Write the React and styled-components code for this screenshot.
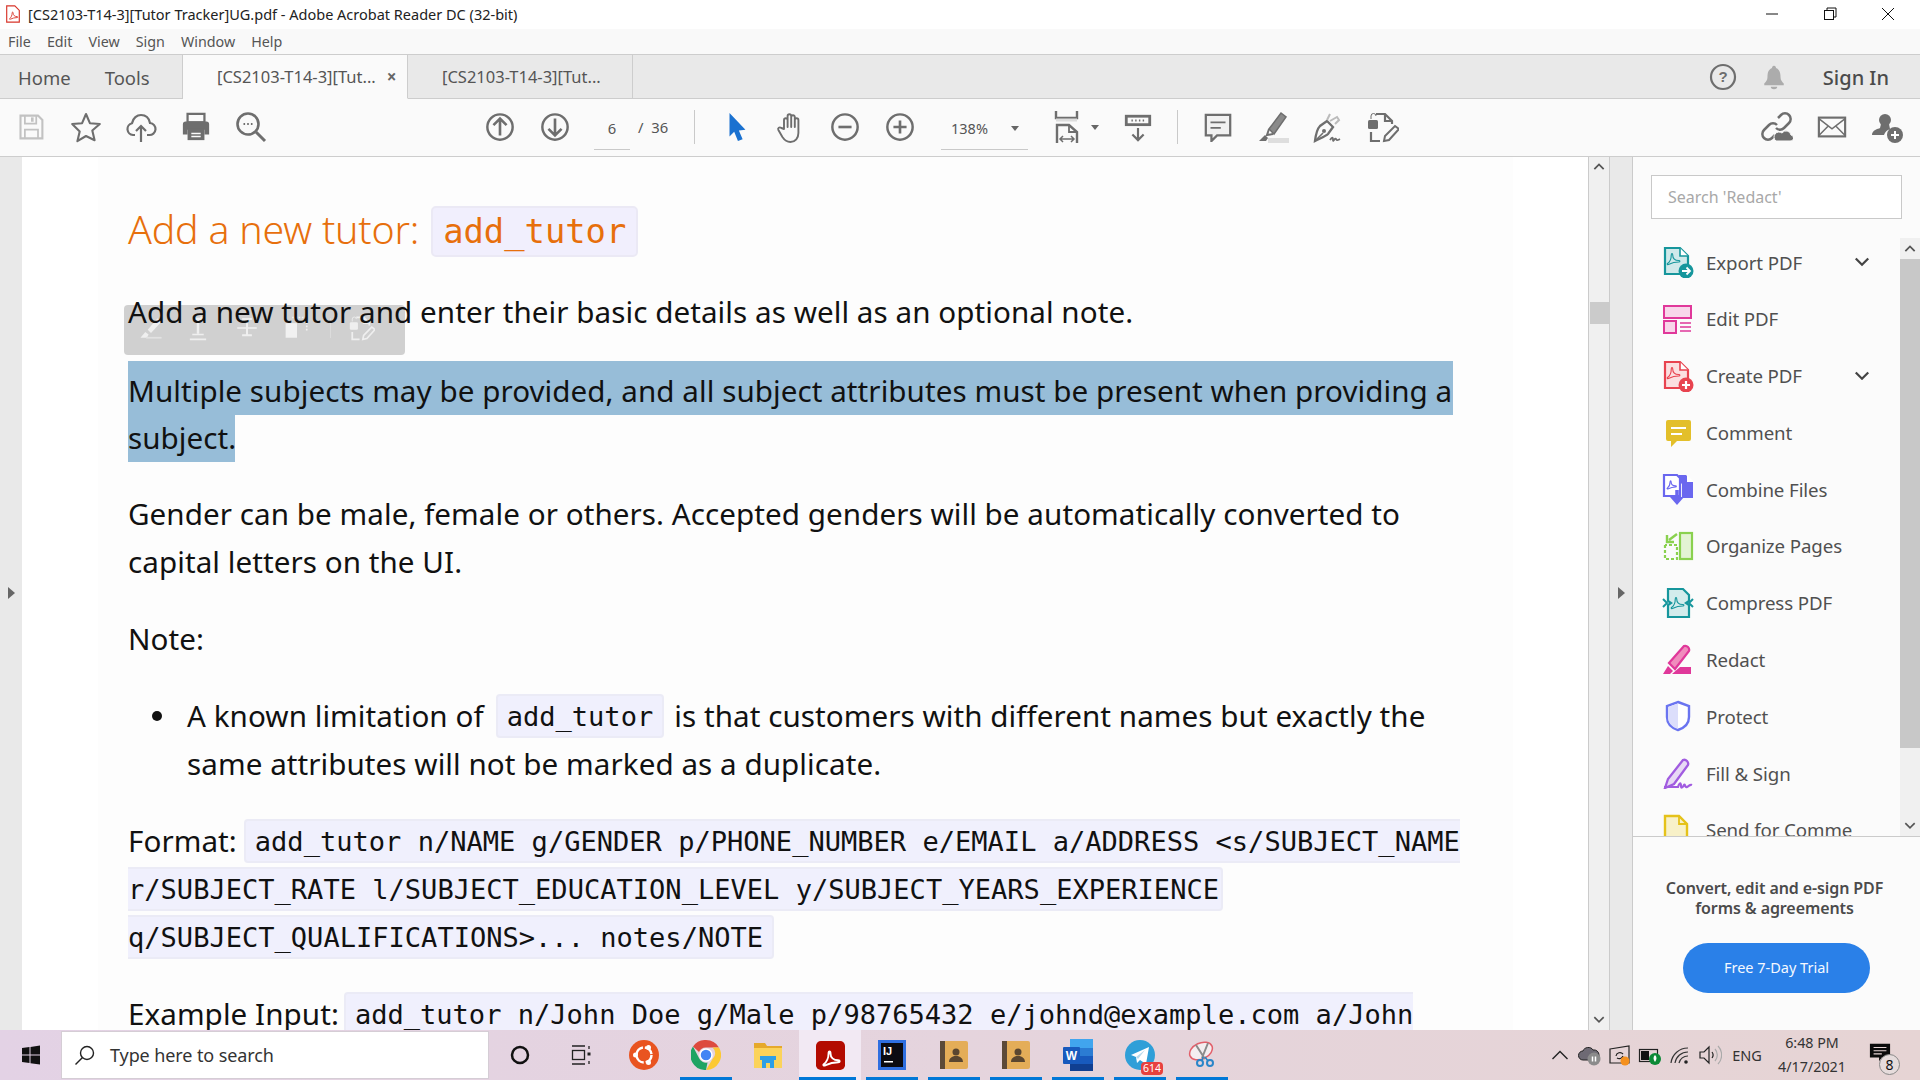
import React from "react";
import styled, { createGlobalStyle } from "styled-components";

const Global = createGlobalStyle`
  html, body { margin: 0; padding: 0; background: #fff; overflow: hidden; }
  * { box-sizing: border-box; }
`;
const SANS = `"Noto Sans", "Open Sans", sans-serif`;
const MONO = `"DejaVu Sans Mono", "Liberation Mono", monospace`;

const Root = styled.div`width:1920px;height:1080px;display:flex;flex-direction:column;overflow:hidden;font-family:${SANS};color:#505050;`;
const TitleBar = styled.div`height:29px;display:flex;align-items:center;background:#fff;padding:0 0 1px 4px;flex:none;`;
const TitleText = styled.span`font-size:14.5px;color:#222;margin-left:6px;white-space:nowrap;`;
const WinButtons = styled.div`margin-left:auto;display:flex;padding-right:3px;`;
const WinButton = styled.div`width:58px;height:28px;display:flex;align-items:center;justify-content:center;`;
const MenuBar = styled.div`height:25px;display:flex;align-items:center;background:#f9f9f9;padding-left:8px;gap:16px;flex:none;`;
const MenuItem = styled.span`font-size:14.3px;color:#555;`;
const TabBar = styled.div`height:45px;flex:none;display:flex;background:#e9e9e9;border-top:1px solid #cdcdcd;border-bottom:1px solid #cdcdcd;`;
const NavTabs = styled.div`width:183px;display:flex;align-items:center;padding-left:18px;gap:34px;border-right:1px solid #cdcdcd;margin-bottom:-1px;`;
const NavTab = styled.span`font-size:18.5px;color:#555;`;
const DocTab = styled.div`width:${p=>p.$w}px;display:flex;align-items:center;padding-left:34px;font-size:16.5px;color:#555;margin-bottom:-1px;white-space:nowrap;
  background:${p=>p.$active?"#fafafa":"#e9e9e9"};border-right:1px solid #cdcdcd;border-bottom:${p=>p.$active?"1px solid #fafafa":"1px solid #cdcdcd"};`;
const TabClose = styled.span`margin-left:11px;font-size:17px;font-weight:700;color:#666;`;
const TabRight = styled.div`margin-left:auto;display:flex;align-items:center;padding-right:31px;`;
const SignIn = styled.span`font-size:20px;font-weight:500;color:#4b4b4b;margin-left:36px;padding-top:1px;`;
const Toolbar = styled.div`height:58px;flex:none;display:flex;align-items:center;background:#fafafa;border-bottom:1px solid #cdcdcd;padding:0 6px 1px 3px;`;
const Tool = styled.div`width:${p=>p.$w||55}px;height:40px;flex:none;display:flex;align-items:center;justify-content:center;`;
const Gap = styled.div`width:${p=>p.$w}px;flex:none;`;
const Grow = styled.div`flex:1;`;
const Divider = styled.div`width:1px;height:34px;background:#c9c9c9;flex:none;`;
const PageBox = styled.div`width:36px;height:42px;display:flex;align-items:center;justify-content:center;border-bottom:1px solid #c9c9c9;font-size:14.8px;color:#555;margin-top:3px;flex:none;`;
const PageTotal = styled.div`width:31px;margin-left:8px;font-size:14.8px;color:#555;flex:none;white-space:nowrap;`;
const ZoomBox = styled.div`width:87px;height:42px;display:flex;align-items:center;padding-left:10px;justify-content:space-between;padding-right:9px;border-bottom:1px solid #c9c9c9;font-size:14.5px;color:#555;margin-top:3px;flex:none;`;
const Caret = styled.span`width:0;height:0;border-left:4px solid transparent;border-right:4px solid transparent;border-top:5px solid #666;flex:none;`;

const Main = styled.div`height:873px;flex:none;display:flex;`;
const Gutter = styled.div`width:${p=>p.$w}px;background:#e9e9e9;flex:none;display:flex;align-items:center;justify-content:center;`;
const Arrow = styled.span`width:0;height:0;border-top:6px solid transparent;border-bottom:6px solid transparent;border-left:7px solid #666;margin-top:-2px;`;
const DocView = styled.div`width:1566px;flex:none;background:#fff;overflow:hidden;position:relative;`;
const Page = styled.div`margin-left:76px;width:1415px;height:873px;background:#fdfdfd;padding:49px 0 0 30px;position:relative;font-size:29.6px;letter-spacing:.06px;color:#111;`;
const Heading = styled.div`display:flex;align-items:center;height:51px;color:#e76f0c;font-size:39.3px;font-weight:300;letter-spacing:-.2px;gap:12px;white-space:nowrap;`;
const HeadLabel = styled.span`display:block;margin-top:-6px;`;
const HeadCode = styled.code`font-family:${MONO};font-size:33.8px;letter-spacing:0;background:#f1effd;border:2px solid #ebe9f5;border-radius:5px;height:51px;display:flex;align-items:center;padding:0 10px;`;
const Para = styled.div`margin-top:${p=>p.$mt||29}px;position:relative;z-index:1;`;
const Line = styled.div`height:48px;line-height:46px;white-space:nowrap;display:flex;align-items:center;padding-bottom:1px;`;
const CodeLine = styled.div`height:48px;white-space:nowrap;display:flex;align-items:center;`;
const Selected = styled.span`display:block;background:#97bdd8;height:${p=>p.$h}px;line-height:${p=>p.$h===54?"59px":"48px"};margin-top:${p=>p.$h===54?-3:1}px;white-space:nowrap;width:${p=>p.$w}px;`;
const FloatBar = styled.div`position:absolute;left:26px;top:148px;width:281px;height:50px;background:#d0d0d0;border-radius:4px;display:flex;align-items:center;padding:0 6px 4px 5px;z-index:0;`;
const FloatSlot = styled.div`width:${p=>p.$w}px;display:flex;justify-content:center;flex:none;`;
const FloatSep = styled.div`width:1px;height:20px;background:#dcdcdc;margin:0 14px 0 9px;`;
const Code = styled.code`font-family:${MONO};font-size:27.05px;letter-spacing:0;background:#f0f0fd;border:2px solid #ebebf6;display:inline-block;height:44px;line-height:42px;white-space:pre;
  padding:0 ${p=>p.$pr!==undefined?p.$pr:p.$open==="right"?0:9}px 0 ${p=>p.$open==="left"?0:9}px;
  border-left-width:${p=>p.$open==="left"?0:2}px;border-right-width:${p=>p.$open==="right"?0:2}px;
  border-radius:${p=>p.$open==="left"?"0 4px 4px 0":p.$open==="right"?"4px 0 0 4px":"4px"};margin-left:${p=>p.$ml||0}px;margin-right:${p=>p.$mr||0}px;`;
const ListRow = styled.div`display:flex;align-items:flex-start;`;
const Bullet = styled.span`width:10px;height:10px;border-radius:50%;background:#111;margin:19px 25px 0 24px;flex:none;`;

const ScrollBar = styled.div`width:22px;flex:none;background:#f0f0f0;border-left:1px solid #cbcbcb;border-right:1px solid #cbcbcb;display:flex;flex-direction:column;align-items:center;`;
const ScrollBtn = styled.div`height:20px;flex:none;display:flex;align-items:center;justify-content:center;margin-top:${p=>p.$auto?"auto":"0"};`;
const Thumb = styled.div`width:19px;height:22px;background:#cbcbcb;margin-top:125px;`;

const Panel = styled.div`width:288px;flex:none;background:#fbfbfb;border-left:1px solid #cbcbcb;display:flex;flex-direction:column;`;
const SearchWrap = styled.div`height:81px;flex:none;padding:18px 17px 0 18px;`;
const SearchBox = styled.div`height:44px;background:#fff;border:1px solid #c9c9c9;display:flex;align-items:center;padding-left:16px;font-size:16px;color:#a8a8a8;width:251px;`;
const ToolsRow = styled.div`height:598px;flex:none;display:flex;`;
const ToolList = styled.div`flex:1;overflow:hidden;padding-left:17px;`;
const ToolItem = styled.div`height:56.8px;width:228px;margin-top:${p=>p.$first?-4.4:0}px;display:flex;align-items:center;padding:0 8px 0 12px;font-size:18.7px;letter-spacing:-.1px;color:#505050;white-space:nowrap;flex:none;`;
const ToolIcon = styled.div`width:32px;height:32px;flex:none;margin-right:12px;display:flex;align-items:center;justify-content:center;`;
const Chev = styled.div`margin-left:auto;display:flex;`;
const SideScroll = styled.div`width:20px;flex:none;background:#f0f0f0;display:flex;flex-direction:column;`;
const SideThumb = styled.div`height:489px;background:#c8c8c8;flex:none;`;
const SideBtn = styled.div`height:21px;flex:none;display:flex;align-items:center;justify-content:center;margin-top:${p=>p.$auto?"auto":"0"};`;
const Promo = styled.div`flex:1;border-top:1px solid #cbcbcb;display:flex;flex-direction:column;align-items:center;padding-top:41px;`;
const PromoText = styled.div`font-size:16px;font-weight:600;line-height:20px;text-align:center;color:#4b4b4b;letter-spacing:-.1px;margin-right:4px;`;
const TrialBtn = styled.div`width:187px;height:50px;background:#2a80e8;border-radius:25px;color:#f4f8ff;font-size:14.5px;display:flex;align-items:center;justify-content:center;margin-top:25px;padding-bottom:2px;`;

const Taskbar = styled.div`height:50px;flex:none;display:flex;align-items:stretch;background:linear-gradient(90deg,#e3d2e5 0%,#e5d4dd 50%,#e6d4d4 100%);color:#222;`;
const StartBtn = styled.div`width:61px;display:flex;align-items:center;justify-content:center;flex:none;`;
const TaskSearch = styled.div`width:428px;flex:none;background:#fff;margin:1px 0;border:1px solid #d5cdd5;display:flex;align-items:center;padding-left:12px;font-size:18px;color:#333;gap:14px;letter-spacing:-.1px;`;
const TaskSlot = styled.div`width:62px;flex:none;position:relative;display:flex;align-items:center;justify-content:center;background:${p=>p.$active?"#f2e9f3":"transparent"};
  &::after{content:"";display:${p=>p.$run?"block":"none"};position:absolute;bottom:0;left:${p=>p.$active?0:5}px;right:5px;height:3px;background:#0078d7;}`;
const Badge = styled.span`position:absolute;right:8px;bottom:5px;background:#e8413e;color:#fff;font-size:10.5px;line-height:13px;padding:0 2px;border-radius:4px;`;
const Tray = styled.div`margin-left:auto;display:flex;align-items:center;padding-right:15px;`;
const TraySlot = styled.div`width:${p=>p.$w||30}px;display:flex;justify-content:center;align-items:center;flex:none;`;
const TrayText = styled.span`font-size:14.5px;color:#333;`;
const Clock = styled.div`width:86px;text-align:center;font-size:14.3px;line-height:24px;color:#333;flex:none;`;
const NotifWrap = styled.div`width:50px;height:50px;position:relative;display:flex;align-items:center;justify-content:center;flex:none;padding-bottom:4px;`;
const NotifBadge = styled.span`position:absolute;left:24px;top:24px;width:21px;height:21px;border-radius:50%;background:#e6dcdc;border:1px solid #888;font-size:14px;line-height:19px;text-align:center;color:#111;`;

const Svg = styled.svg`display:block;flex:none;`;
const I = ({ s = 30, w, h, vb = "0 0 32 32", children }) => (
  <Svg width={w || s} height={h || s} viewBox={vb} fill="none">{children}</Svg>
);
const G = "#6e6e6e";

const PdfMark = ({ c, sw = 1.3 }) => <path d="M6 22c3-2 5-7 5-11 0-3 2-3 2 0 0 4 3 7 8 7 2 0 2 2 0 2-5 0-9 1-13 3-2 1-3 0-2-1z" fill="none" stroke={c} strokeWidth={sw} strokeLinejoin="round" />;

const IconSave = () => <I s={28}><path d="M4 3h20l5 5v21H4z" stroke="#c2c2c2" strokeWidth="2.4" /><path d="M9 3v9h13V3M9 29V19h15v10" stroke="#c2c2c2" strokeWidth="2" /><rect x="16" y="5" width="3" height="5" fill="#c2c2c2" /></I>;
const IconStar = () => <I s={32}><path d="M16 3l3.9 9.2 9.9.8-7.5 6.5 2.3 9.7L16 25l-8.6 5.2 2.3-9.7L2.2 13l9.9-.8z" stroke={G} strokeWidth="2.1" strokeLinejoin="round" /></I>;
const IconCloudUp = () => <I s={32}><path d="M10 24H8a6 6 0 0 1-1-11.8C8 7 12 4 16 4c5 0 8 3 9 8a6 6 0 0 1-1 12h-2" stroke={G} strokeWidth="2.2" /><path d="M16 31V15M11 20l5-5 5 5" stroke={G} strokeWidth="2.2" /></I>;
const IconPrint = () => <I s={30}><rect x="7" y="2" width="18" height="9" stroke={G} strokeWidth="2.4" fill="none" /><path d="M5 10h22a3 3 0 0 1 3 3v11h-5v-5H7v5H2V13a3 3 0 0 1 3-3z" fill={G} /><path d="M7 18h18v12H7z" fill={G} /><path d="M11 23h10M11 26h10" stroke="#fafafa" strokeWidth="1.6" /></I>;
const IconSearchDots = () => <I s={32}><circle cx="13" cy="13" r="10.5" stroke={G} strokeWidth="2.6" /><path d="M21 21l9 9" stroke={G} strokeWidth="3" /><path d="M8.5 13h1.6M12.2 13h1.6M15.9 13h1.6" stroke={G} strokeWidth="2" /></I>;
const CircleI = ({ d }) => <I s={30}><circle cx="16" cy="16" r="13.5" stroke={G} strokeWidth="2.6" /><path d={d} stroke={G} strokeWidth="2.8" /></I>;
const IconCursor = () => <I s={30}><path d="M8 1l17 18-7 .6 4 9.4-5 2-4-10-5 5z" fill="#1a71d0" /></I>;
const IconHand = () => <I s={32}><path d="M9 18V9a1.8 1.8 0 0 1 3.6 0v7V5a1.8 1.8 0 0 1 3.6 0v11V6a1.8 1.8 0 0 1 3.6 0v10-7a1.8 1.8 0 0 1 3.6 0v13c0 5-3 9-8 9-4 0-6-2-8-5l-4-7c-1-2 1-3.5 3-2z" stroke={G} strokeWidth="1.9" strokeLinejoin="round" /></I>;
const IconFit = () => <I s={32}><path d="M3 0v7h21V0" stroke={G} strokeWidth="2.4" /><path d="M3 9h21" stroke="#ddd" strokeWidth="3" /><path d="M4 32V14h12l8 7v11" stroke={G} strokeWidth="2.4" /><path d="M16 14v7h8" stroke={G} strokeWidth="1.8" /><path d="M7 28h14M10 25l-3 3 3 3M18 25l3 3-3 3" stroke={G} strokeWidth="1.5" /></I>;
const IconScroll = () => <I s={30}><rect x="2" y="3" width="28" height="12" fill={G} /><rect x="5" y="6" width="22" height="6" fill="#fafafa" /><path d="M9 9h1.5M13 9h1.5M17 9h1.5M21 9h1.5" stroke={G} strokeWidth="2" /><path d="M16 17v13M10 24l6 6 6-6" stroke={G} strokeWidth="2.3" /></I>;
const IconComment = () => <I s={30}><path d="M3 3h26v22H15l-6 6v-6H3z" stroke={G} strokeWidth="2.4" fill="#f1f1f1" /><path d="M8 11h16M8 17h11" stroke={G} strokeWidth="1.8" /></I>;
const IconHighlight = () => <I s={32}><path d="M12 18L24 2l5 4-12 17z" fill="#8a8a8a" stroke={G} strokeWidth="1.5" /><path d="M12 18l-2 6 6-1" stroke={G} strokeWidth="2" /><path d="M2 30l6-6 3 3-2 3z" fill={G} /><rect x="11" y="27" width="21" height="5" fill="#dedede" /></I>;
const IconPen = () => <I s={32}><path d="M3 30c1-8 3-13 5-15l7-5 6 6-5 7c-2 2-7 4-13 7z" stroke={G} strokeWidth="2.3" /><path d="M3 30l8-8" stroke={G} strokeWidth="1.6" /><circle cx="12" cy="20" r="2" fill={G} /><path d="M15 9l3-6M18 10l7-4 2 3-4 4" stroke="#bbb" strokeWidth="2" /><path d="M18 29c2-3 3-3 3 0s2-3 3-1 2 1 4 0" stroke={G} strokeWidth="1.8" /></I>;
const IconShare = ({ c = G, bg = "#fafafa", s = 32 }) => <I s={s}><rect x="1" y="9" width="10" height="9" rx="1.5" fill={c} /><path d="M4 8V5a2.5 2.5 0 0 1 5 0" stroke={c} strokeWidth="1" /><path d="M9 3h9l7 7v3M18 3v7h7" stroke={c} strokeWidth="2.2" /><path d="M4 21v9h9" stroke={c} strokeWidth="2.2" /><path d="M17 30l1-5 10-10 4 3-10 11z" stroke={c} strokeWidth="2" fill={bg} /></I>;
const IconLink = () => <I s={32}><path d="M17 7l3-3a5.6 5.6 0 0 1 8 8l-5 5a5.6 5.6 0 0 1-8 0" stroke={G} strokeWidth="2.5" /><path d="M14 24l-3 3a5.6 5.6 0 0 1-8-8l5-5a5.6 5.6 0 0 1 8 0" stroke={G} strokeWidth="2.5" /><path d="M15 30h14a3 3 0 0 0 1-6 5 5 0 0 0-9-2 4 4 0 0 0-6 8z" fill={G} stroke="#fafafa" strokeWidth="1" /></I>;
const IconMail = () => <I s={30}><rect x="2" y="6" width="28" height="20" stroke={G} strokeWidth="2.3" /><path d="M2 7l14 11L30 7M2 25l10-10M30 25L20 15" stroke={G} strokeWidth="1.6" /></I>;
const IconPerson = () => <I s={32}><circle cx="14" cy="9" r="6" fill={G} /><path d="M1 24c0-5 6-6 8-7l1-4h8l1 5c-3 1-5 3-6 6z" fill={G} /><circle cx="24" cy="24" r="8" fill={G} /><path d="M24 20v8M20 24h8" stroke="#fff" strokeWidth="2" /></I>;
const IconHelp = () => <Svg width="28" height="28" viewBox="0 0 28 28" fill="none"><circle cx="14" cy="14" r="12" stroke="#6e6e6e" strokeWidth="2.2" /><text x="14" y="19" fontSize="15" fontWeight="700" textAnchor="middle" fill="#6e6e6e" fontFamily="Liberation Sans">?</text></Svg>;
const IconBell = () => <I s={26}><path d="M16 2c2 0 2.500 2 2.500 3 5 2 5.500 7 5.500 11 0 4 2 6 4 8v2H4v-2c2-2 4-4 4-8 0-4 .5-9 5.500-11 0-1 .5-3 2.500-3z" fill="#acacac" /><path d="M12 28a4 3 0 0 0 8 0z" fill="#acacac" /></I>;
const ChevD = ({ c = "#444", w = 16 }) => <Svg width={w} height={w * .6} viewBox="0 0 16 10" fill="none"><path d="M1.500 1.500L8 8l6.500-6.500" stroke={c} strokeWidth="2.300" /></Svg>;
const ChevU = ({ c = "#555", w = 12 }) => <Svg width={w} height={w * .6} viewBox="0 0 16 10" fill="none"><path d="M1.500 8.500L8 2l6.500 6.500" stroke={c} strokeWidth="2.500" /></Svg>;

const DocBadge = ({ c, fillc, mark, children }) => (
  <I s={32}>
    <path d="M3 2h15l8 8v18H3z" stroke={c} strokeWidth="2.2" fill={fillc} />
    <path d="M18 2v8h8" stroke={c} strokeWidth="1.6" fill="#fff" />
    <g transform="translate(1 1) scale(.75)"><PdfMark c={mark || c} sw={1.5} /></g>
    {children}
  </I>
);
const SideExport = () => <DocBadge c="#16969c" fillc="#cfe9ea"><circle cx="24" cy="25" r="7.500" fill="#16969c" /><path d="M20 25h7M24.500 21.500l3.500 3.500-3.500 3.500" stroke="#fff" strokeWidth="1.800" /></DocBadge>;
const SideCreate = () => <DocBadge c="#e8434f" fillc="#fbdfe0"><circle cx="24" cy="25" r="7.500" fill="#e8434f" /><path d="M24 21v8M20 25h8" stroke="#fff" strokeWidth="2.200" /></DocBadge>;
const SideEdit = () => <I s={32}><rect x="2" y="3" width="27" height="12" stroke="#e0389a" strokeWidth="2" fill="#f8d6ea" /><rect x="2" y="18" width="12" height="12" stroke="#e0389a" strokeWidth="2" fill="#f8d6ea" /><path d="M18 20h11M18 24h11M18 28h11" stroke="#e0389a" strokeWidth="1.500" /></I>;
const SideComment = () => <I s={32}><path d="M6 4h21a2 2 0 0 1 2 2v17a2 2 0 0 1-2 2H15l-6 6v-6H6a2 2 0 0 1-2-2V6a2 2 0 0 1 2-2z" fill="#e3bf2a" /><path d="M9 12h15M9 18h11" stroke="#fff" strokeWidth="2.200" /></I>;
const SideCombine = () => <I s={32}><path d="M2 2h13l3 3v18H2z" stroke="#6a67ef" strokeWidth="2.200" fill="#fff" /><path d="M17 2h7l7 7v16H20V11l-3-3z" fill="#6a67ef" /><path d="M25 2v7h7" fill="#fff" /><g transform="translate(2 3) scale(.55)"><PdfMark c="#6a67ef" sw={2} /></g><path d="M15 17v10" stroke="#6a67ef" strokeWidth="3.500" /><path d="M8 24h14l-7 8z" fill="#6a67ef" /></I>;
const SideOrganize = () => <I s={32}><rect x="18" y="3" width="12" height="26" fill="#e3f3d4" stroke="#8ad14f" strokeWidth="2.200" /><path d="M3 15v14h12V15H3" stroke="#8ad14f" strokeWidth="2.200" strokeDasharray="3 2" /><path d="M15 4L7 10M5 5v7h7" stroke="#8ad14f" strokeWidth="2.400" /></I>;
const SideCompress = () => <I s={32}><path d="M6 2h15l6 6v6l-3 2 3 2v12H6V18l3-2-3-2z" stroke="#16969c" strokeWidth="2.200" fill="#d3ecec" /><g transform="translate(5 4) scale(.75)"><PdfMark c="#16969c" sw={1.500} /></g><path d="M1 12l4 4-4 4M31 12l-4 4 4 4" stroke="#16969c" strokeWidth="2" /></I>;
const SideRedact = () => <I s={32}><path d="M7 19L22 2c3-1 6 2 5 5L13 25z" fill="#f08cbd" stroke="#e0389a" strokeWidth="2.200" /><path d="M1 30l5-8 5 5-3 3z" fill="#e0389a" /><path d="M10 30h19v-7H18z" fill="#e0389a" /></I>;
const SideProtect = () => <I s={32}><path d="M16 2l11 4v11c0 7-5 11-11 13-6-2-11-6-11-13V6z" stroke="#6a74f0" strokeWidth="2.400" fill="#fff" /><path d="M16 3.500L6 7v10c0 6 4 10 10 12z" fill="#dcdefb" /></I>;
const SideFill = () => <I s={32}><path d="M3 31l3-9L21 3c3-1 6 2 5 5L12 27z" fill="#e8d9f5" stroke="#a15ce0" strokeWidth="2.300" /><path d="M2 30h14c1-4 3-5 3-1 0 3 2 1 3-1s1 3 3 2 3-3 5-2" stroke="#a15ce0" strokeWidth="2.200" /></I>;
const SideSend = () => <I s={32}><path d="M3 2h14l8 8v20H3z" stroke="#e5c21a" strokeWidth="2.400" fill="#f8f1c8" /><path d="M17 2v8h8" stroke="#e5c21a" strokeWidth="1.800" /><rect x="17" y="22" width="14" height="9" fill="#e5c21a" /></I>;

const TWin = () => <I s={20} vb="0 0 20 20"><path d="M1 3l7.500-1v7.500H1zM9.500 2L19 .5v9H9.500zM1 10.500h7.500V18L1 17zM9.500 10.500H19v9l-9.500-1.300z" fill="#111" /></I>;
const TSearch = () => <I s={22} vb="0 0 22 22"><circle cx="13" cy="9" r="6.500" stroke="#222" strokeWidth="1.400" /><path d="M8.500 13.500L1.500 20.500" stroke="#222" strokeWidth="1.400" /></I>;
const TCortana = () => <I s={20} vb="0 0 20 20"><circle cx="10" cy="10" r="8" stroke="#111" strokeWidth="2.500" /></I>;
const TView = () => <I s={22} vb="0 0 22 22"><path d="M1 2h13M1 20h13" stroke="#222" strokeWidth="1.300" /><rect x="1.500" y="6.500" width="12" height="9" stroke="#222" strokeWidth="1.300" /><path d="M18 2v3M18 17v3" stroke="#222" strokeWidth="1.300" /><rect x="16.500" y="8.500" width="3" height="3" fill="#222" /></I>;
const TUbuntu = () => <I s={30} vb="0 0 30 30"><circle cx="15" cy="15" r="15" fill="#e95420" /><circle cx="15" cy="15" r="7.500" stroke="#fff" strokeWidth="2.500" strokeDasharray="10 2" /><circle cx="6.500" cy="15" r="2.500" fill="#fff" /><circle cx="19.500" cy="7.500" r="2.500" fill="#fff" /><circle cx="19.500" cy="22.500" r="2.500" fill="#fff" /></I>;
const TChrome = () => <I s={30} vb="0 0 30 30"><path d="M15 0a15 15 0 0 1 13 7.500H15a7.500 7.500 0 0 0-7 4.500L2 6.500A15 15 0 0 1 15 0z" fill="#dd4b3e" /><path d="M28 7.500A15 15 0 0 1 15 30l6.500-11a7.500 7.500 0 0 0 0-11.500z" fill="#fcc934" /><path d="M2 6.500L8 18a7.500 7.500 0 0 0 8.500 4.500L15 30A15 15 0 0 1 2 6.500z" fill="#1fa463" /><circle cx="15" cy="15" r="6" fill="#4285f4" stroke="#fff" strokeWidth="1.500" /></I>;
const TFolder = () => <I s={30} vb="0 0 30 30"><path d="M1 3h11l2 3h15v4H1z" fill="#e6a92b" /><rect x="1" y="8" width="28" height="20" fill="#fbd35a" /><path d="M9 28v-9h12v9h-4v-5h-4v5z" fill="#2e9fe6" /><rect x="7" y="16" width="16" height="4" fill="#2e9fe6" /></I>;
const TAcrobat = () => <I s={29} vb="0 0 30 30"><rect width="30" height="30" rx="5" fill="#b30b00" /><g transform="translate(2 2)"><PdfMark c="#fff" sw={2} /></g></I>;
const TIdea = () => <Svg width="28" height="30" viewBox="0 0 28 30"><rect width="28" height="30" fill="#2f6fe0" /><rect x="3" y="3" width="22" height="24" fill="#0b0b12" /><text x="5" y="15" fontSize="11" fontWeight="700" fill="#fff" fontFamily="Liberation Sans">IJ</text><rect x="6" y="21" width="9" height="1.500" fill="#fff" /></Svg>;
const TContacts = () => <I s={28} vb="0 0 28 28"><rect width="28" height="28" rx="2" fill="#e4ad58" /><rect width="5" height="28" fill="#5c4a38" /><circle cx="16" cy="11" r="3.500" fill="#5a4630" /><path d="M9 21c0-4 3-5 5-6h4c2 1 5 2 5 6z" fill="#5a4630" /></I>;
const TWord = () => <Svg width="30" height="32" viewBox="0 0 30 32"><rect x="7" y="0" width="23" height="32" rx="2" fill="#2b7cd3" /><rect x="7" y="0" width="23" height="9" fill="#41a5ee" /><rect x="7" y="17" width="23" height="8" fill="#185abd" /><rect x="7" y="25" width="23" height="7" fill="#103f91" /><rect x="0" y="8" width="17" height="17" rx="1" fill="#185abd" /><text x="8.500" y="21" fontSize="12" fontWeight="700" fill="#fff" textAnchor="middle" fontFamily="Liberation Sans">W</text></Svg>;
const TTelegram = () => <I s={30} vb="0 0 30 30"><circle cx="15" cy="15" r="15" fill="#2f9fd8" /><path d="M6 15L24 7l-3 17-6-4-3 3-1-6z" fill="#fff" /><path d="M11 17l9-7-7 9z" fill="#b8d9ec" /></I>;
const TSnip = () => <I s={28} vb="0 0 28 28"><ellipse cx="13" cy="10" rx="12" ry="8" transform="rotate(-25 13 10)" stroke="#e25f6a" strokeWidth="1.500" fill="#f4eef0" /><path d="M8 4l9 14M20 2l-6 15" stroke="#8b8b8b" strokeWidth="2" /><circle cx="12" cy="22" r="3" stroke="#2a86c9" strokeWidth="2" /><circle cx="22" cy="22" r="3" stroke="#2a86c9" strokeWidth="2" /><path d="M14 20l1-4M20 20l-3-4" stroke="#2a86c9" strokeWidth="1.500" /></I>;
const TrayChev = () => <I s={18} vb="0 0 18 18"><path d="M1.500 13L9 5.500 16.500 13" stroke="#222" strokeWidth="1.400" /></I>;
const TrayCloud = () => <I s={24} vb="0 0 24 24"><path d="M5 17a4.500 4.500 0 0 1 0-9c1-4 8-5 10-1a5 5 0 0 1 6 5v5z" fill="#6e6a74" stroke="#222" strokeWidth="1" /><circle cx="16" cy="16" r="6.500" fill="#8b8b8b" /><path d="M14.500 13.500v5M17.500 13.500v5" stroke="#fff" strokeWidth="1.500" /></I>;
const TraySync = () => <I s={24} vb="0 0 24 24"><path d="M2 6l19-3v17H2z" stroke="#222" strokeWidth="1.200" /><path d="M8 13a4 4 0 0 1 7-2M15 13a4 4 0 0 1-6 2" stroke="#222" strokeWidth="1.200" /><circle cx="17" cy="18" r="4.500" fill="#f5901e" /></I>;
const TrayBatt = () => <I s={24} vb="0 0 24 24"><rect x="1.500" y="6.500" width="18" height="12" stroke="#222" strokeWidth="1.200" /><rect x="3" y="8" width="8" height="9" fill="#111" /><circle cx="17" cy="16" r="6" fill="#0c8a36" /><path d="M17 12c2 2 2 4 0 7-2-3-2-5 0-7z" fill="#fff" /></I>;
const TrayWifi = () => <I s={24} vb="0 0 24 24"><path d="M3 20A17 17 0 0 1 20 5M7 20A13 13 0 0 1 20 9M11 20a9 9 0 0 1 9-7" stroke="#333" strokeWidth="1.200" /><circle cx="18" cy="19" r="1.800" fill="#222" /></I>;
const TrayVol = () => <I s={24} vb="0 0 24 24"><path d="M2 9h4l5-5v16l-5-5H2z" stroke="#222" strokeWidth="1.200" /><path d="M14 9a5 5 0 0 1 0 6" stroke="#222" strokeWidth="1.200" /><path d="M17 6a9 9 0 0 1 0 12M20 3a13 13 0 0 1 0 18" stroke="#aaa" strokeWidth="1.200" /></I>;
const TrayNotif = () => <I s={22} vb="0 0 24 24"><path d="M1 2h22v15h-9l-3 4v-4H1z" fill="#0b0b0b" /><path d="M5 6h14M5 9.500h14M5 13h9" stroke="#e6d4d4" strokeWidth="1.200" /></I>;

const PdfSmall = () => <I s={18} vb="0 0 18 20"><path d="M2 1h9l5 5v13H2z" stroke="#d8352a" strokeWidth="1.300" fill="#fff" /><g transform="translate(2 3) scale(.55)"><PdfMark c="#d8352a" sw={1.800} /></g></I>;

const FloatPen = () => <I s={26}><path d="M12 18L24 4l5 4-13 14z" fill="#efefef" /><path d="M3 28l6-7 4 3-2 4z" fill="#efefef" /><rect x="10" y="27" width="19" height="2" fill="#e2e2e2" /></I>;
const FloatT = () => <I s={26}><path d="M11 5h10M11 2l2 3M21 2l-2 3M16 5v18" stroke="#efefef" strokeWidth="3" /><path d="M9 24h14M6 30h20" stroke="#efefef" strokeWidth="2" /></I>;
const FloatS = () => <I s={26}><path d="M10 5h12M16 5v20M10 25h12" stroke="#efefef" strokeWidth="2.500" /><path d="M4 16h24" stroke="#efefef" strokeWidth="2" /></I>;
const FloatCopy = () => <I s={26}><path d="M2 10h14v18H2z" fill="#f1f1f1" /><path d="M10 3h18v16" stroke="#f1f1f1" strokeWidth="2" strokeDasharray="2 2" /></I>;

const tools = [
  ["Export PDF", SideExport, true], ["Edit PDF", SideEdit], ["Create PDF", SideCreate, true], ["Comment", SideComment],
  ["Combine Files", SideCombine], ["Organize Pages", SideOrganize], ["Compress PDF", SideCompress], ["Redact", SideRedact],
  ["Protect", SideProtect], ["Fill & Sign", SideFill], ["Send for Comme", SideSend],
];
const taskApps = [
  [TCortana], [TView], [TUbuntu], [TChrome, true], [TFolder], [TAcrobat, true, true], [TIdea, true], [TContacts, true], [TContacts, true], [TWord, true], [TTelegram, true, false, "614"], [TSnip, true],
];

export default function App() {
  return (
    <Root>
      <Global />
      <TitleBar>
        <PdfSmall />
        <TitleText>[CS2103-T14-3][Tutor Tracker]UG.pdf - Adobe Acrobat Reader DC (32-bit)</TitleText>
        <WinButtons>
          <WinButton><I s={14} vb="0 0 14 14"><path d="M1 7h12" stroke="#111" /></I></WinButton>
          <WinButton><I s={14} vb="0 0 14 14"><rect x="1.500" y="3.500" width="9" height="9" stroke="#111" /><path d="M4 3V1h9v9h-2" stroke="#111" /></I></WinButton>
          <WinButton><I s={14} vb="0 0 14 14"><path d="M1 1l12 12M13 1L1 13" stroke="#111" /></I></WinButton>
        </WinButtons>
      </TitleBar>
      <MenuBar>
        {["File", "Edit", "View", "Sign", "Window", "Help"].map(m => <MenuItem key={m}>{m}</MenuItem>)}
      </MenuBar>
      <TabBar>
        <NavTabs><NavTab>Home</NavTab><NavTab>Tools</NavTab></NavTabs>
        <DocTab $active $w={225}>[CS2103-T14-3][Tut...<TabClose>×</TabClose></DocTab>
        <DocTab $w={225}>[CS2103-T14-3][Tut...</DocTab>
        <TabRight><IconHelp /><Gap $w={24} /><IconBell /><SignIn>Sign In</SignIn></TabRight>
      </TabBar>
      <Toolbar>
        <Tool><IconSave /></Tool><Tool><IconStar /></Tool><Tool><IconCloudUp /></Tool><Tool><IconPrint /></Tool><Tool><IconSearchDots /></Tool>
        <Gap $w={194} />
        <Tool><CircleI d="M16 25V8M9 14l7-7 7 7" /></Tool><Tool><CircleI d="M16 7v17M9 18l7 7 7-7" /></Tool>
        <Gap $w={12} />
        <PageBox>6</PageBox><PageTotal>/&nbsp; 36</PageTotal>
        <Gap $w={25} /><Divider /><Gap $w={14} />
        <Tool><IconCursor /></Tool><Tool $w={53}><IconHand /></Tool><Tool><CircleI d="M9 16h14" /></Tool><Tool><CircleI d="M9 16h14M16 9v14" /></Tool>
        <Gap $w={14} />
        <ZoomBox>138%<Caret /></ZoomBox>
        <Gap $w={21} />
        <Tool $w={54}><IconFit /><Gap $w={6} /><Caret /></Tool>
        <Gap $w={7} />
        <Tool><IconScroll /></Tool>
        <Gap $w={12} /><Divider /><Gap $w={12} />
        <Tool><IconComment /></Tool><Tool><IconHighlight /></Tool><Tool><IconPen /></Tool><Tool><IconShare /></Tool>
        <Grow />
        <Tool><IconLink /></Tool><Tool><IconMail /></Tool><Tool><IconPerson /></Tool>
      </Toolbar>
      <Main>
        <Gutter $w={22}><Arrow /></Gutter>
        <DocView>
          <Page>
            <Heading><HeadLabel>Add a new tutor:</HeadLabel><HeadCode>add_tutor</HeadCode></Heading>
            <Para $mt={31}><Line>Add a new tutor and enter their basic details as well as an optional note.</Line></Para>
            <FloatBar>
              <FloatSlot $w={44}><FloatPen /></FloatSlot><FloatSlot $w={49}><FloatT /></FloatSlot><FloatSlot $w={50}><FloatS /></FloatSlot><FloatSlot $w={49}><FloatCopy /></FloatSlot>
              <FloatSep /><FloatSlot $w={34}><IconShare c="#efefef" bg="#d0d0d0" s={26} /></FloatSlot>
            </FloatBar>
            <Para>
              <CodeLine><Selected $h={54} $w={1325}>Multiple subjects may be provided, and all subject attributes must be present when providing a</Selected></CodeLine>
              <CodeLine><Selected $h={48} $w={107}>subject.</Selected></CodeLine>
            </Para>
            <Para>
              <Line>Gender can be male, female or others. Accepted genders will be automatically converted to</Line>
              <Line>capital letters on the UI.</Line>
            </Para>
            <Para><Line>Note:</Line></Para>
            <Para>
              <ListRow>
                <Bullet />
                <div>
                  <Line>A known limitation of<Code $ml={12} $mr={10}>add_tutor</Code>is that customers with different names but exactly the</Line>
                  <Line>same attributes will not be marked as a duplicate.</Line>
                </div>
              </ListRow>
            </Para>
            <Para>
              <Line>Format:<Code $open="right" $ml={7}>add_tutor n/NAME g/GENDER p/PHONE_NUMBER e/EMAIL a/ADDRESS &lt;s/SUBJECT_NAME</Code></Line>
              <CodeLine><Code $open="left" $pr={2}>r/SUBJECT_RATE l/SUBJECT_EDUCATION_LEVEL y/SUBJECT_YEARS_EXPERIENCE</Code></CodeLine>
              <CodeLine><Code $open="left">q/SUBJECT_QUALIFICATIONS&gt;... notes/NOTE</Code></CodeLine>
            </Para>
            <Para>
              <Line>Example Input:<Code $open="right" $ml={5}>add_tutor n/John Doe g/Male p/98765432 e/johnd@example.com a/John</Code></Line>
            </Para>
          </Page>
        </DocView>
        <ScrollBar>
          <ScrollBtn><ChevU /></ScrollBtn>
          <Thumb />
          <ScrollBtn $auto><ChevD c="#555" w={12} /></ScrollBtn>
        </ScrollBar>
        <Gutter $w={22}><Arrow /></Gutter>
        <Panel>
          <SearchWrap><SearchBox>Search 'Redact'</SearchBox></SearchWrap>
          <ToolsRow>
            <ToolList>
              {tools.map(([label, Icon, more], i) => (
                <ToolItem key={label} $first={i === 0}>
                  <ToolIcon><Icon /></ToolIcon>{label}
                  {more && <Chev><ChevD /></Chev>}
                </ToolItem>
              ))}
            </ToolList>
            <SideScroll>
              <SideBtn><ChevU /></SideBtn>
              <SideThumb />
              <SideBtn $auto><ChevD c="#555" w={12} /></SideBtn>
            </SideScroll>
          </ToolsRow>
          <Promo>
            <PromoText>Convert, edit and e-sign PDF<br />forms &amp; agreements</PromoText>
            <TrialBtn>Free 7-Day Trial</TrialBtn>
          </Promo>
        </Panel>
      </Main>
      <Taskbar>
        <StartBtn><TWin /></StartBtn>
        <TaskSearch><TSearch />Type here to search</TaskSearch>
        {taskApps.map(([Icon, run, active, badge], i) => (
          <TaskSlot key={i} $run={run} $active={active}><Icon />{badge && <Badge>{badge}</Badge>}</TaskSlot>
        ))}
        <Tray>
          <TraySlot><TrayChev /></TraySlot><TraySlot><TrayCloud /></TraySlot><TraySlot><TraySync /></TraySlot><TraySlot><TrayBatt /></TraySlot><TraySlot><TrayWifi /></TraySlot><TraySlot><TrayVol /></TraySlot>
          <TraySlot $w={44}><TrayText>ENG</TrayText></TraySlot>
          <Clock>6:48 PM<br />4/17/2021</Clock>
          <NotifWrap><TrayNotif /><NotifBadge>8</NotifBadge></NotifWrap>
        </Tray>
      </Taskbar>
    </Root>
  );
}
